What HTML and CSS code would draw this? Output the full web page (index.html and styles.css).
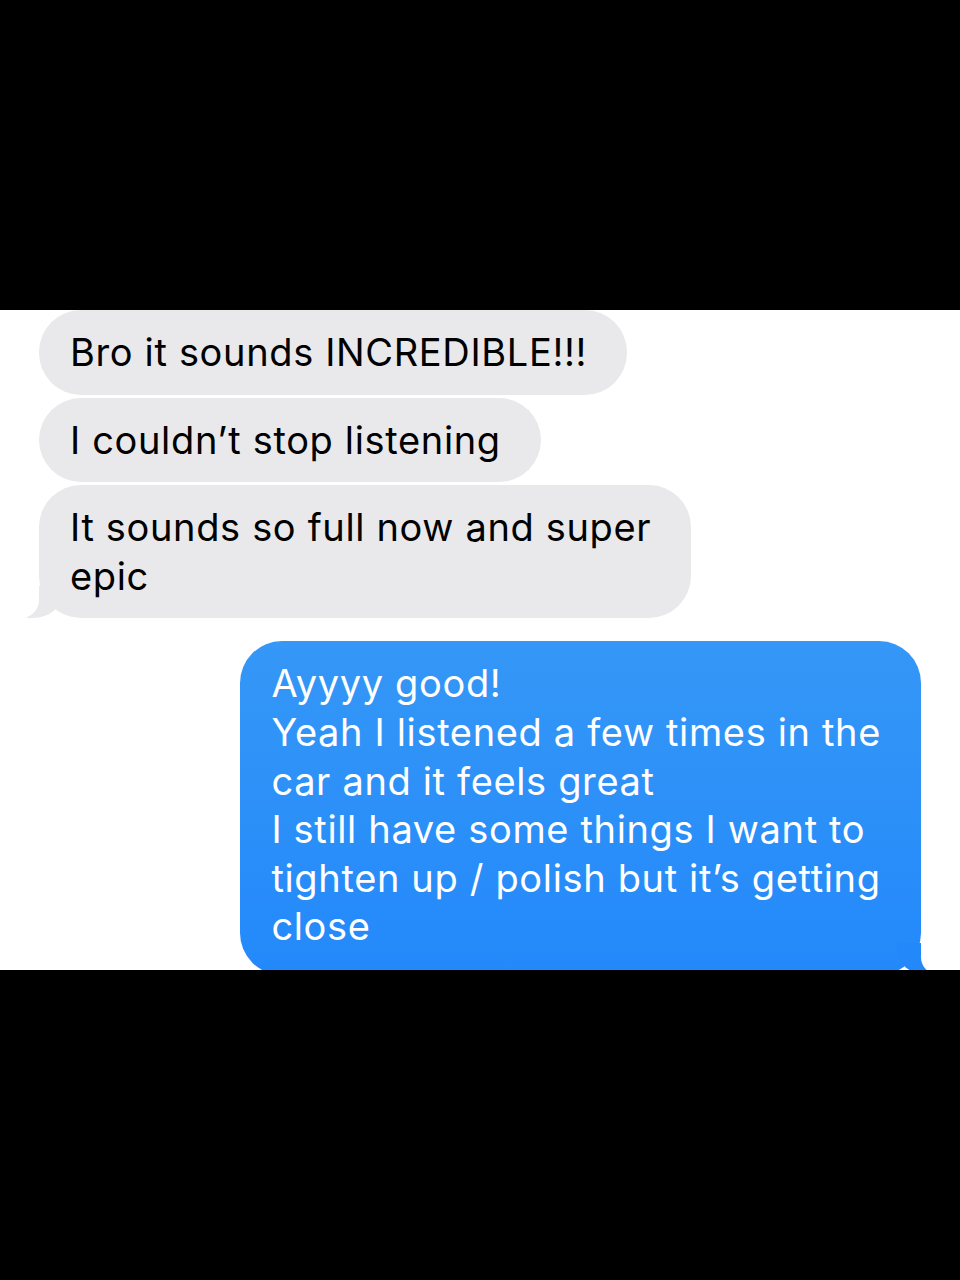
FILE: index.html
```html
<!DOCTYPE html>
<html lang="en">
<head>
<meta charset="utf-8">
<title>Messages</title>
<link rel="stylesheet" href="styles.css">
</head>
<body>
<div class="top-bar"></div>
<section class="chat">
  <div class="msg them">Bro it sounds INCREDIBLE!!!</div>
  <div class="msg them">I couldn’t stop listening</div>
  <div class="msg them tail">It sounds so full now and super<br>epic</div>
  <div class="msg me tail">Ayyyy good!<br>Yeah I listened a few times in the<br>car and it feels great<br>I still have some things I want to<br>tighten up / polish but it’s getting<br>close</div>
</section>
<div class="bottom-bar"></div>
</body>
</html>
```
FILE: styles.css
```css
html, body {
  margin: 0;
  padding: 0;
  background: #000;
}
body {
  width: 960px;
  height: 1280px;
  font-family: Inter, "Noto Sans", "Liberation Sans", sans-serif;
}
.top-bar {
  height: 310px;
  background: #000;
}
.bottom-bar {
  height: 310px;
  background: #000;
}
.chat {
  height: 660px;
  background: #fff;
  overflow: hidden;
  display: flex;
  flex-direction: column;
  align-items: flex-start;
  gap: 3px;
  padding: 0 39px;
  box-sizing: border-box;
}
.msg {
  position: relative;
  font-size: 38px;
  line-height: 48.6px;
  letter-spacing: 0.65px;
  padding: 18px 40px 18px 31px;
  border-radius: 42px;
  white-space: nowrap;
}
.them {
  background: #e9e9eb;
  color: #000;
}
.them.tail::before {
  content: "";
  position: absolute;
  bottom: 0;
  left: -12px;
  height: 32px;
  width: 0;
  border-left: 36px solid #e9e9eb;
  border-bottom-right-radius: 30px 26px;
}
.them.tail::after {
  content: "";
  position: absolute;
  bottom: 0;
  left: -47px;
  height: 32px;
  width: 47px;
  background: #fff;
  border-bottom-right-radius: 18px;
}
.me {
  align-self: flex-end;
  margin-top: 20px;
  background: linear-gradient(#3597f6, #2389fb);
  color: #fff;
  padding-bottom: 24px;
}
.me.tail::before {
  content: "";
  position: absolute;
  bottom: 0;
  right: -12px;
  height: 32px;
  width: 0;
  border-right: 36px solid #2389fb;
  border-bottom-left-radius: 30px 26px;
}
.me.tail::after {
  content: "";
  position: absolute;
  bottom: 0;
  right: -47px;
  height: 32px;
  width: 47px;
  background: #fff;
  border-bottom-left-radius: 18px;
}
```
